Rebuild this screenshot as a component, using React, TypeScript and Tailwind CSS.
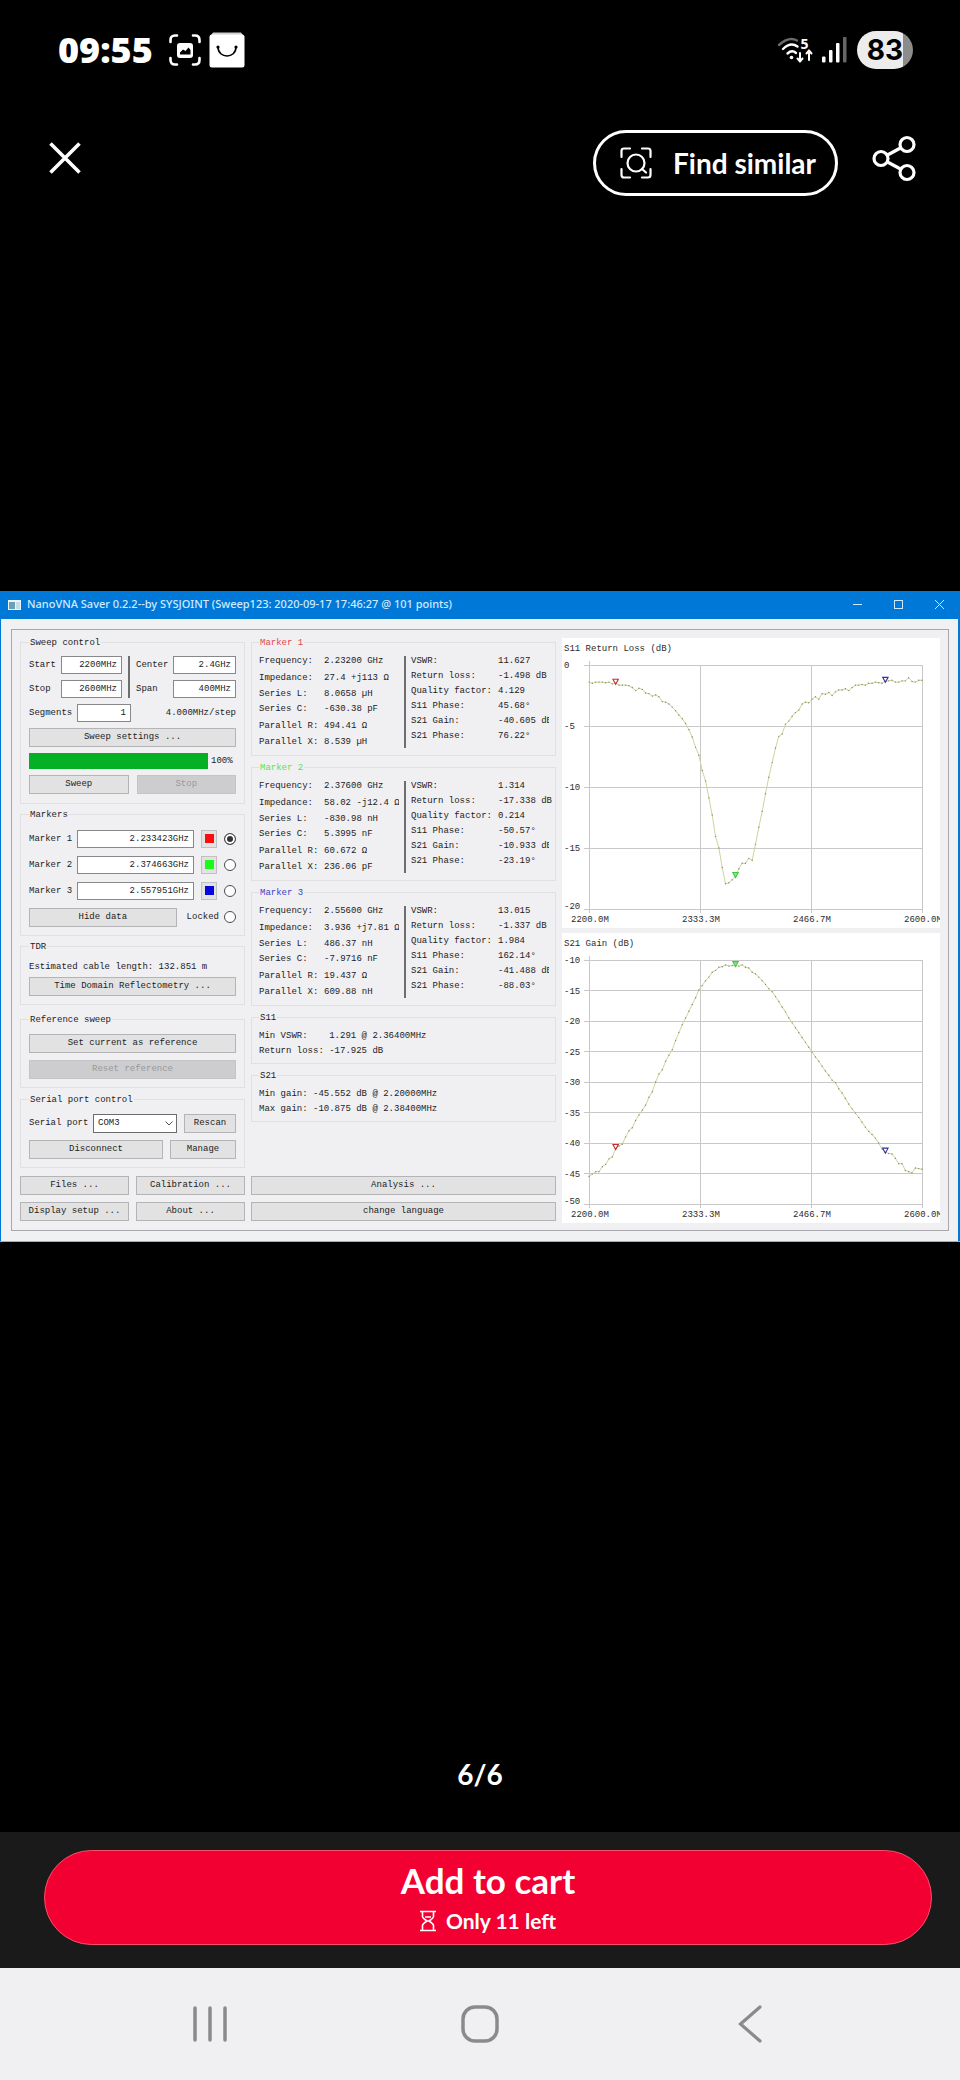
import React, { useState } from 'react';
import { clsx } from 'clsx';

interface MarkerReadout {
  name: string;
  titleClass: string;
  left: [string, string][];
  right: [string, string][];
}

const MARKER_READOUTS: MarkerReadout[] = [
  {
    name: 'Marker 1',
    titleClass: 'text-[#e04848]',
    left: [
      ['Frequency:', '2.23200 GHz'],
      ['Impedance:', '27.4 +j113 Ω'],
      ['Series L:', '8.0658 µH'],
      ['Series C:', '-630.38 pF'],
      ['Parallel R:', '494.41 Ω'],
      ['Parallel X:', '8.539 µH']
    ],
    right: [
      ['VSWR:', '11.627'],
      ['Return loss:', '-1.498 dB'],
      ['Quality factor:', '4.129'],
      ['S11 Phase:', '45.68°'],
      ['S21 Gain:', '-40.605 dB'],
      ['S21 Phase:', '76.22°']
    ]
  },
  {
    name: 'Marker 2',
    titleClass: 'text-[#50e850]',
    left: [
      ['Frequency:', '2.37600 GHz'],
      ['Impedance:', '58.02 -j12.4 Ω'],
      ['Series L:', '-830.98 nH'],
      ['Series C:', '5.3995 nF'],
      ['Parallel R:', '60.672 Ω'],
      ['Parallel X:', '236.06 pF']
    ],
    right: [
      ['VSWR:', '1.314'],
      ['Return loss:', '-17.338 dB'],
      ['Quality factor:', '0.214'],
      ['S11 Phase:', '-50.57°'],
      ['S21 Gain:', '-10.933 dB'],
      ['S21 Phase:', '-23.19°']
    ]
  },
  {
    name: 'Marker 3',
    titleClass: 'text-[#4040c8]',
    left: [
      ['Frequency:', '2.55600 GHz'],
      ['Impedance:', '3.936 +j7.81 Ω'],
      ['Series L:', '486.37 nH'],
      ['Series C:', '-7.9716 nF'],
      ['Parallel R:', '19.437 Ω'],
      ['Parallel X:', '609.88 nH']
    ],
    right: [
      ['VSWR:', '13.015'],
      ['Return loss:', '-1.337 dB'],
      ['Quality factor:', '1.984'],
      ['S11 Phase:', '162.14°'],
      ['S21 Gain:', '-41.488 dB'],
      ['S21 Phase:', '-88.03°']
    ]
  }
];

const MARKER_INPUTS = [
  { name: 'Marker 1', value: '2.233423GHz', swatch: 'bg-[#fb0d0d]' },
  { name: 'Marker 2', value: '2.374663GHz', swatch: 'bg-[#1afb1a]' },
  { name: 'Marker 3', value: '2.557951GHz', swatch: 'bg-[#0505e0]' }
];

// One sample every 4 MHz, 2200 - 2600 MHz
const S11_SAMPLES = [
  -1.4, -1.5, -1.4, -1.4, -1.4, -1.45, -1.4, -1.55, -1.5, -1.65, -1.65, -1.65, -1.7, -1.85, -2.1, -1.9, -2.0,
  -2.3, -2.35, -2.55, -2.45, -2.6, -3.0, -3.05, -3.2, -3.45, -3.75, -4.1, -4.4, -4.8, -5.3, -5.9, -6.75, -7.4,
  -8.65, -9.5, -10.9, -12.3, -14.05, -15.0, -16.6, -17.93, -17.85, -17.6, -17.34, -16.7, -16.25, -16.25, -15.85,
  -16.0, -14.7, -13.3, -12.0, -10.55, -9.2, -8.0, -6.8, -5.85, -5.65, -4.85, -4.6, -4.2, -3.9, -3.7, -3.2,
  -3.05, -3.1, -2.8, -2.6, -2.8, -2.35, -2.4, -2.25, -2.5, -2.2, -2.05, -2.05, -1.95, -2.1, -1.85, -1.65,
  -1.65, -1.6, -1.65, -1.5, -1.5, -1.4, -1.45, -1.5, -1.34, -1.3, -1.25, -1.4, -1.4, -1.3, -1.3, -1.05, -1.35,
  -1.4, -1.25, -1.25
];

const S21_SAMPLES = [
  -45.5, -45.1, -44.7, -44.7, -43.9, -43.5, -42.6, -42.3, -40.9, -40.5, -40.2, -39, -38, -37.5, -36.3, -35.4,
  -34.6, -33.8, -32.5, -31.6, -30, -28.7, -28, -26.6, -25.6, -24.7, -23.2, -21.9, -20.6, -19.5, -18.4, -17.3,
  -16.2, -14.9, -14.2, -13.4, -12.8, -12, -11.7, -11.2, -11.1, -10.8, -11, -10.9, -10.93, -11, -10.8, -11.2,
  -11.3, -12, -12.3, -12.8, -13.4, -14, -14.7, -15.2, -16, -16.8, -17.7, -18.5, -19.5, -20.3, -21.1, -21.9,
  -22.7, -23.5, -24.3, -25.1, -25.9, -26.6, -27.4, -28.2, -28.9, -29.7, -30.1, -31.1, -31.8, -32.7, -33.6,
  -34.4, -35.1, -35.8, -36.6, -37.4, -38.1, -38.6, -39.2, -40, -41, -41.5, -41.7, -41.8, -42.5, -43.4, -43.4,
  -44.5, -44.7, -44.9, -44.1, -44.2, -44.3
];

const CHART_MARKERS = [
  { index: 8, color: '#c03030' },
  { index: 44, color: '#3ccc3c' },
  { index: 89, color: '#3030a0' }
];

const X_LABELS = ['2200.0M', '2333.3M', '2466.7M', '2600.0M'];

interface ChartProps {
  title: string;
  samples: number[];
  top: number;
  bottom: number;
}

const PLOT = { x: 27, y: 27, width: 333, height: 244 };

const Chart: React.FC<ChartProps> = ({ title, samples, top, bottom }) => {
  const toX = (index: number) => PLOT.x + (PLOT.width * index) / 100;
  const toY = (value: number) => PLOT.y + (PLOT.height * (top - value)) / (top - bottom);

  const ticks: number[] = [];
  for (let value = top; value >= bottom; value -= 5) ticks.push(value);

  const points = samples.map((value, i) => `${toX(i).toFixed(1)},${toY(value).toFixed(1)}`);

  return (
    <svg viewBox="0 0 378 290" role="img" aria-label={title} className="block w-full bg-white">
      <g fill="#2c2c2c" fontSize="9">
        <text x="2" y="13">{title}</text>
        {ticks.map(value => (
          <text key={value} x="2" y={value === bottom ? 271 : Math.round(toY(value)) + 3}>{value}</text>
        ))}
        {X_LABELS.map((label, i) => (
          <text key={label} x={9 + i * 111} y="284">{label}</text>
        ))}
      </g>

      <g stroke="#c8c8c8" shapeRendering="crispEdges">
        {ticks.map(value => (
          <line key={value} x1="22" x2="360" y1={toY(value)} y2={toY(value)} />
        ))}
        {X_LABELS.map((label, i) => (
          <line key={label} x1={27 + i * 111} x2={27 + i * 111} y1={i === 0 ? 23 : 27} y2="275" />
        ))}
      </g>

      <polyline points={points.join(' ')} fill="none" stroke="#d2d2a0" />
      {samples.map((value, i) => (
        <circle key={i} cx={toX(i)} cy={toY(value)} r="0.7" fill="#8c8c58" />
      ))}

      {CHART_MARKERS.map(({ index, color }) => {
        const x = toX(index);
        const y = toY(samples[index]);
        return (
          <path
            key={index}
            d={`M${x} ${y + 1}l-2.7-5h5.4z`}
            fill={index === 44 ? '#8ce68c' : 'none'}
            stroke={color}
            strokeWidth="1.1"
          />
        );
      })}
    </svg>
  );
};

interface GroupProps {
  title: string;
  titleClass?: string;
  className?: string;
  children: React.ReactNode;
}

const Group: React.FC<GroupProps> = ({ title, titleClass, className, children }) => (
  <fieldset className={clsx('min-w-0 border border-[#e0e0e2]', className)}>
    <legend className={clsx('px-px leading-3', titleClass)}>{title}</legend>
    {children}
  </fieldset>
);

const ToolButton: React.FC<React.ButtonHTMLAttributes<HTMLButtonElement>> = ({ className, ...props }) => (
  <button
    type="button"
    className={clsx(
      'h-[19px] min-w-0 whitespace-nowrap border border-[#b4b4b6] bg-[#e2e2e3] leading-3 disabled:border-[#c4c4c6] disabled:bg-[#cdcdcf] disabled:text-[#98989a]',
      className
    )}
    {...props}
  />
);

const FieldInput: React.FC<React.InputHTMLAttributes<HTMLInputElement>> = ({ className, ...props }) => (
  <input
    type="text"
    className={clsx('h-[18px] min-w-0 border border-[#88888a] bg-white pr-1 text-right leading-3', className)}
    {...props}
  />
);

const RADIO_CLASS =
  'm-0 size-3 shrink-0 appearance-none rounded-full border border-[#4c4c4c] bg-white checked:bg-[#333] checked:shadow-[inset_0_0_0_2px_white]';

const ControlPanel: React.FC = () => {
  const [activeMarker, setActiveMarker] = useState('Marker 1');

  return (
    <div className="flex min-w-0 flex-col">
      <Group title="Sweep control" className="px-2 pt-[7px] pb-[9px]">
        <div className="flex flex-col gap-1.5">
          <div className="grid grid-cols-[32px_61px_14px_37px_minmax(0,1fr)] items-center gap-y-1.5">
            <label htmlFor="start">Start</label>
            <FieldInput id="start" defaultValue="2200MHz" />
            <div className="row-span-2 w-0.5 self-stretch justify-self-center bg-[#6e6e70]" />
            <label htmlFor="center">Center</label>
            <FieldInput id="center" defaultValue="2.4GHz" />
            <label htmlFor="stop">Stop</label>
            <FieldInput id="stop" defaultValue="2600MHz" />
            <label htmlFor="span">Span</label>
            <FieldInput id="span" defaultValue="400MHz" />
          </div>
          <div className="flex items-center">
            <label htmlFor="segments" className="w-12">Segments</label>
            <FieldInput id="segments" defaultValue="1" className="w-[54px]" />
            <span className="ml-auto">4.000MHz/step</span>
          </div>
          <ToolButton>Sweep settings ...</ToolButton>
          <div className="flex h-4 items-center gap-[3px]">
            <div
              role="progressbar"
              aria-label="Sweep progress"
              aria-valuenow={100}
              className="h-4 flex-1 bg-[#06b025]"
            />
            <span className="w-[25px]">100%</span>
          </div>
          <div className="grid grid-cols-2 gap-2">
            <ToolButton>Sweep</ToolButton>
            <ToolButton disabled>Stop</ToolButton>
          </div>
        </div>
      </Group>

      <Group title="Markers" className="mt-[5px] px-2 pt-[9px] pb-2">
        <div className="flex flex-col gap-2">
          {MARKER_INPUTS.map(({ name, value, swatch }) => (
            <div key={name} className="flex items-center">
              <label htmlFor={name} className="w-12 shrink-0">{name}</label>
              <FieldInput id={name} defaultValue={value} className="flex-1" />
              <button
                type="button"
                aria-label={`${name} color`}
                className="mx-[7px] flex h-[18px] w-4 items-center justify-center border border-[#c0c0c2] bg-[#e2e2e3]"
              >
                <span className={clsx('size-[9px]', swatch)} />
              </button>
              <input
                type="radio"
                name="active-marker"
                aria-label={`Select ${name}`}
                checked={activeMarker === name}
                onChange={() => setActiveMarker(name)}
                className={RADIO_CLASS}
              />
            </div>
          ))}
          <div className="flex items-center">
            <ToolButton className="flex-1">Hide data</ToolButton>
            <label className="flex items-center gap-[5px] pl-2.5">
              Locked
              <input type="radio" name="locked" className={RADIO_CLASS} />
            </label>
          </div>
        </div>
      </Group>

      <Group title="TDR" className="mt-[5px] px-2 pt-2 pb-2">
        <div className="flex flex-col gap-1">
          <p className="whitespace-nowrap">Estimated cable length: 132.851 m</p>
          <ToolButton>Time Domain Reflectometry ...</ToolButton>
        </div>
      </Group>

      <Group title="Reference sweep" className="mt-[9px] px-2 pt-2 pb-2">
        <div className="flex flex-col gap-[7px]">
          <ToolButton>Set current as reference</ToolButton>
          <ToolButton disabled>Reset reference</ToolButton>
        </div>
      </Group>

      <Group title="Serial port control" className="mt-1.5 px-2 pt-2 pb-2">
        <div className="flex flex-col gap-[7px]">
          <div className="flex items-center">
            <label htmlFor="port" className="w-16 shrink-0">Serial port</label>
            <div className="relative mr-[7px] flex-1">
              <select
                id="port"
                className="block h-[19px] w-full appearance-none border border-[#6c6c6e] bg-white pl-1 leading-3"
              >
                <option>COM3</option>
              </select>
              <svg viewBox="0 0 8 5" className="pointer-events-none absolute top-[7px] right-1 h-[5px] w-2">
                <path d="M.5.5L4 4 7.500.5" fill="none" stroke="#505050" />
              </svg>
            </div>
            <ToolButton className="w-[52px]">Rescan</ToolButton>
          </div>
          <div className="flex gap-[7px]">
            <ToolButton className="flex-1">Disconnect</ToolButton>
            <ToolButton className="w-[66px]">Manage</ToolButton>
          </div>
        </div>
      </Group>

      <div className="mt-auto grid grid-cols-2 gap-[7px] pb-0.5">
        <ToolButton>Files ...</ToolButton>
        <ToolButton>Calibration ...</ToolButton>
        <ToolButton>Display setup ...</ToolButton>
        <ToolButton>About ...</ToolButton>
      </div>
    </div>
  );
};

const ReadoutPanel: React.FC = () => (
  <div className="flex min-w-0 flex-col gap-1.5">
    {MARKER_READOUTS.map(({ name, titleClass, left, right }) => (
      <Group key={name} title={name} titleClass={titleClass} className="px-[7px] py-[5px]">
        <div className="flex whitespace-nowrap">
          <dl className="w-[140px] shrink-0">
            {left.map(([label, value]) => (
              <div key={label} className={clsx('flex items-center', value.includes('Ω') ? 'h-[18px]' : 'h-[15px]')}>
                <dt className="w-[65px] shrink-0">{label}</dt>
                <dd className="min-w-0 overflow-hidden">{value}</dd>
              </div>
            ))}
          </dl>
          <div className="mx-[5px] my-0.5 w-0.5 shrink-0 bg-[#6e6e70]" />
          <dl>
            {right.map(([label, value]) => (
              <div key={label} className="flex h-[15px] items-center">
                <dt className="w-[87px] shrink-0">{label}</dt>
                <dd className={clsx(label === 'S21 Gain:' && 'w-[51px] overflow-hidden')}>{value}</dd>
              </div>
            ))}
          </dl>
        </div>
      </Group>
    ))}

    <Group title="S11" className="px-[7px] pt-[5px] pb-1">
      <p className="leading-[15px] whitespace-pre">{'Min VSWR:    1.291 @ 2.36400MHz'}</p>
      <p className="leading-[15px] whitespace-pre">Return loss: -17.925 dB</p>
    </Group>
    <Group title="S21" className="px-[7px] pt-[5px] pb-1">
      <p className="leading-[15px] whitespace-pre">Min gain: -45.552 dB @ 2.20000MHz</p>
      <p className="leading-[15px] whitespace-pre">Max gain: -10.875 dB @ 2.38400MHz</p>
    </Group>

    <div className="mt-auto flex flex-col gap-[7px] pb-0.5">
      <ToolButton>Analysis ...</ToolButton>
      <ToolButton>change language</ToolButton>
    </div>
  </div>
);

const SaverWindow: React.FC = () => (
  <section className="w-full border-b border-[#8cb8c8] bg-[#0078d7]">
    <div className="flex h-7 items-center pl-2 text-[#cfeaff]">
      <svg viewBox="0 0 13 10" className="h-2.5 w-[13px]">
        <rect width="13" height="10" fill="#e8f4fa" />
        <rect x="1" y="2" width="6" height="7" fill="#6e9fb4" />
        <rect x="8" y="2" width="4" height="7" fill="#c6dde8" />
      </svg>
      <h1 className="ml-1.5 font-['Noto_Sans',sans-serif] text-[11px] font-medium whitespace-nowrap">
        NanoVNA Saver 0.2.2--by SYSJOINT (Sweep123: 2020-09-17 17:46:27 @ 101 points)
      </h1>
      <div className="ml-auto flex gap-6 pr-3">
        <button type="button" aria-label="Minimize" className="size-[17px] p-1">
          <svg viewBox="0 0 9 9" className="size-[9px]"><path d="M0 4.500h9" stroke="currentColor" /></svg>
        </button>
        <button type="button" aria-label="Maximize" className="size-[17px] p-1">
          <svg viewBox="0 0 9 9" className="size-[9px]">
            <rect x=".5" y=".5" width="8" height="8" fill="none" stroke="currentColor" />
          </svg>
        </button>
        <button type="button" aria-label="Close window" className="size-[17px] p-1">
          <svg viewBox="0 0 9 9" className="size-[9px]"><path d="M0 0l9 9M9 0L0 9" stroke="currentColor" /></svg>
        </button>
      </div>
    </div>

    <div className="mr-0.5 ml-px bg-[#eff1f3] py-2.5 pr-[9px] pl-2.5 font-['Liberation_Mono',monospace] text-[9px] leading-3 text-[#1c1c1c]">
      <div className="grid grid-cols-[minmax(0,225fr)_minmax(0,305fr)_minmax(0,378fr)] gap-1.5 border border-[#a8a8ac] bg-[#f0eff2] px-2 py-[7px]">
        <ControlPanel />
        <ReadoutPanel />
        <div className="flex min-w-0 flex-col gap-[5px] pt-px">
          <Chart title="S11 Return Loss (dB)" samples={S11_SAMPLES} top={0} bottom={-20} />
          <Chart title="S21 Gain (dB)" samples={S21_SAMPLES} top={-10} bottom={-50} />
        </div>
      </div>
    </div>
  </section>
);

const StatusBar: React.FC = () => (
  <div className="flex h-[100px] items-center pr-[47px] pl-[58px]">
    <time className="font-['Open_Sans',sans-serif] text-[36px] leading-none font-extrabold">09:55</time>
    <svg viewBox="0 0 32 32" className="ml-4 size-8" fill="none" stroke="white" strokeWidth="2.600" strokeLinecap="round">
      <path d="M1.500 8V6Q1.500 1.500 6 1.500H8M24 1.500h2q4.500 0 4.500 4.500v2M30.500 24v2q0 4.500-4.500 4.500h-2M8 30.500H6Q1.500 30.500 1.500 26v-2" />
      <rect x="8" y="9" width="16" height="15" rx="3" fill="white" stroke="none" />
      <path d="M11 20.500v-2l3-3 2.500 1.500 3-3.500 2 2.500v4.500z" fill="black" stroke="none" />
    </svg>
    <svg viewBox="0 0 36 36" className="ml-2 size-9">
      <path d="M4 .5h28l3 4H1z" fill="#cfcfcf" />
      <rect x=".5" y="2.500" width="35" height="33" rx="2.500" fill="white" />
      <path d="M9 15c0 12 18 12 18 0" fill="none" stroke="black" strokeWidth="1.600" />
      <circle cx="9" cy="15" r="1.600" />
      <circle cx="27" cy="15" r="1.600" />
    </svg>

    <div className="ml-auto flex items-center">
      <svg viewBox="0 0 36 28" className="h-7 w-9 overflow-visible" fill="none" stroke="white" strokeWidth="2.400" strokeLinecap="round">
        <path d="M2 9Q12 0 20 4.500" stroke="#6a6a6a" />
        <path d="M6 13q7.500-7.500 14.500-2.500M10.500 17.500q4.500-4 8.500-.500" />
        <circle cx="14.500" cy="21.500" r="1.800" fill="white" stroke="none" />
        <path d="M23 17v8M20.500 22.500L23 25.500l2.500-3M32 24v-9M29.500 17.500L32 14.500l2.500 3" strokeWidth="2" />
        <text x="23.500" y="13" fill="white" stroke="none" className="font-['Open_Sans',sans-serif] text-[14px] font-bold">5</text>
      </svg>
      <svg viewBox="0 0 26 28" className="ml-2 h-7 w-[26px]">
        <rect x="1" y="20.500" width="3.500" height="6" rx="1" fill="white" />
        <rect x="8" y="14" width="3.500" height="12.500" rx="1" fill="white" />
        <rect x="15" y="7" width="3.500" height="19.500" rx="1" fill="white" />
        <rect x="22" y="1" width="3.500" height="25.500" rx="1" fill="#666" />
      </svg>
      <div className="ml-2.5 h-[38px] w-14 rounded-full bg-[linear-gradient(to_right,#ececec_82%,#8c8c8c_82%)] text-center font-['Inter',sans-serif] text-[28px] leading-[38px] font-bold text-black">
        83
      </div>
    </div>
  </div>
);

const App: React.FC = () => (
  <div className="flex min-h-screen flex-col bg-black text-white">
    <header className="h-[196px]">
      <StatusBar />
      <div className="flex items-start pt-[30px] pr-[43px] pl-12">
        <button type="button" aria-label="Close" className="flex h-14 items-center">
          <svg viewBox="0 0 34 34" className="size-[34px]">
            <path d="M2.500 2.500l29 29M31.500 2.500l-29 29" stroke="white" strokeWidth="3.600" />
          </svg>
        </button>
        <button
          type="button"
          className="ml-auto flex h-[66px] items-center gap-[21px] rounded-full border-[3px] border-white pr-[19px] pl-6"
        >
          <svg viewBox="0 0 32 32" className="size-8" fill="none" stroke="white" strokeWidth="2.200" strokeLinecap="round">
            <path d="M1.500 10V4q0-2.500 2.500-2.500h6M22 1.500h6q2.500 0 2.500 2.500v6M30.500 22v6q0 2.500-2.500 2.500h-6M10 30.500H4q-2.500 0-2.500-2.500v-6" />
            <circle cx="16" cy="16" r="8.500" />
            <path d="M22 22l4 3.500" />
          </svg>
          <span className="font-['Lato',sans-serif] text-[28px] leading-8 font-bold">Find similar</span>
        </button>
        <button type="button" aria-label="Share" className="ml-[33px] flex h-14 items-center">
          <svg viewBox="0 0 46 48" className="h-12 w-[46px]" fill="none" stroke="white" strokeWidth="3.200">
            <circle cx="10" cy="24.500" r="7" />
            <circle cx="36" cy="10.500" r="7" />
            <circle cx="36" cy="38.500" r="7" />
            <path d="M16.500 21l13-7M16.500 28l13 7" />
          </svg>
        </button>
      </div>
    </header>

    <main className="flex flex-1 items-center">
      <SaverWindow />
    </main>

    <div className="flex h-[196px] items-end justify-center pb-10 font-['Lato',sans-serif] text-[28px] leading-9 font-bold">
      6/6
    </div>

    <div className="bg-[#1a1a1a] pt-[18px] pr-7 pb-[23px] pl-11 font-['Lato',sans-serif]">
      <button
        type="button"
        className="flex h-[95px] w-full flex-col items-center rounded-full border border-[#f8506c] bg-[#f20032] pt-2"
      >
        <span className="text-[35px] leading-[42px] font-bold">Add to cart</span>
        <span className="flex items-center gap-2.5 text-[21px] leading-10 font-bold">
          <svg viewBox="0 0 16 22" className="h-[22px] w-4" fill="none" stroke="white" strokeWidth="1.600">
            <path d="M0 1.500h16M0 20.500h16M2.500 2v4.500Q2.500 8 7 11q-4.500 3-4.500 4.500V20M13.500 2v4.500Q13.500 8 9 11q4.500 3 4.500 4.500V20M5 7h6" />
          </svg>
          Only 11 left
        </span>
      </button>
    </div>

    <nav className="grid h-28 grid-cols-3 items-center bg-[#f0f0f2] px-[75px] text-[#8a8a8c]">
      <button type="button" aria-label="Recent apps" className="flex justify-center">
        <svg viewBox="0 0 36 38" className="h-[38px] w-9" stroke="currentColor" strokeWidth="3.500" strokeLinecap="round">
          <path d="M3 3v32M18 3v32M33 3v32" />
        </svg>
      </button>
      <button type="button" aria-label="Home" className="flex justify-center">
        <svg viewBox="0 0 38 38" className="size-[38px]" fill="none" stroke="currentColor" strokeWidth="3.500">
          <rect x="2" y="2" width="34" height="34" rx="12" />
        </svg>
      </button>
      <button type="button" aria-label="Back" className="flex justify-center">
        <svg viewBox="0 0 24 38" className="h-[38px] w-6" fill="none" stroke="currentColor" strokeWidth="3.200" strokeLinecap="round">
          <path d="M22 2L2.500 19 22 36" />
        </svg>
      </button>
    </nav>
  </div>
);

export default App;
